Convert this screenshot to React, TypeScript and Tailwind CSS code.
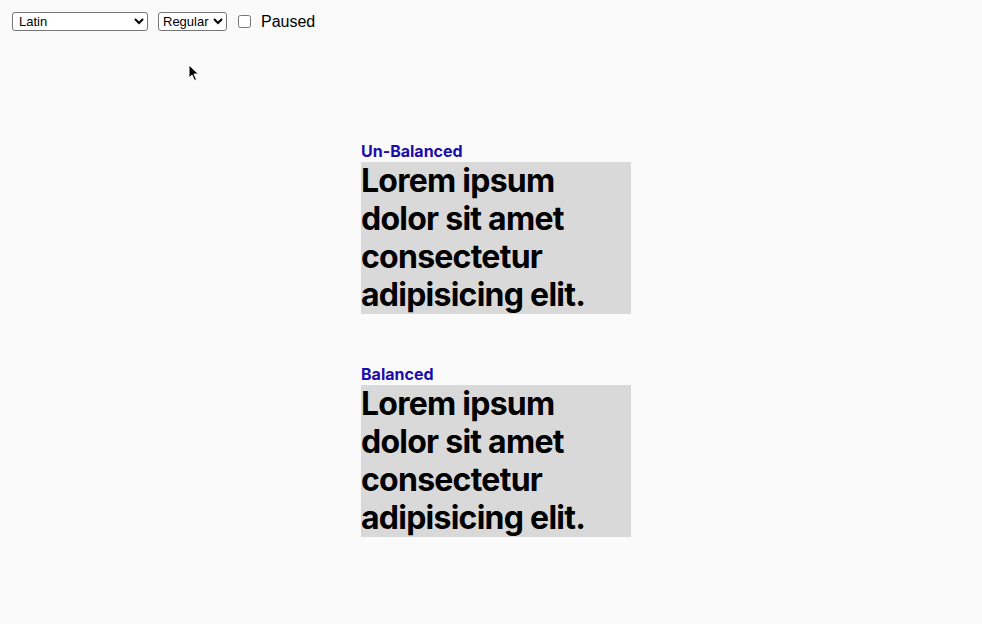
import React from "react";

const text = "Lorem ipsum dolor sit amet consectetur adipisicing elit.";

const Sample = ({ title, balanced }: { title: string; balanced?: boolean }) => {
  return (
    <section className="flex flex-col">
      <h2 className="text-[16px] leading-[16px] mb-[3px] font-bold text-[#1a0dab] font-['Inter',sans-serif]">{title}</h2>
      <p
        className={
          "w-[270px] bg-[#d9d9d9] text-black text-[32px] leading-[38px] tracking-[-0.75px] font-bold font-['Inter',sans-serif] " +
          (balanced ? "text-balance" : "")
        }
      >
        {text}
      </p>
    </section>
  );
};

export default function App() {
  return (
    <div className="relative min-h-[624px] bg-[#fafafa] font-['Liberation_Sans',Arial,sans-serif]">
      <div className="flex items-center pt-[12px] pl-[12px] text-[16px] text-black">
        <select className="w-[136px] h-[19px] border border-[#767676] rounded-[3px] bg-white text-[13px] pl-[2px]">
          <option>Latin</option>
        </select>
        <select className="ml-[10px] w-[69px] h-[19px] border border-[#767676] rounded-[3px] bg-white text-[13px] pl-0">
          <option>Regular</option>
        </select>
        <label className="ml-[11px] flex items-center">
          <input type="checkbox" className="w-[13px] h-[13px]" />
          <span className="ml-[10px] leading-[19px]">Paused</span>
        </label>
      </div>

      <div className="ml-[361px] mt-[112px] flex flex-col gap-[52px]">
        <Sample title="Un-Balanced" />
        <Sample title="Balanced" balanced />
      </div>

      {/* mouse pointer captured in the screenshot */}
      <svg className="absolute left-[188px] top-[64px]" width="12" height="18" viewBox="0 0 12 18">
        <path d="M1 1 L1 14 L4 11 L6.5 16.5 L8.5 15.5 L6 10 L10.5 10 Z" fill="#000" stroke="#fff" strokeWidth="1" />
      </svg>
    </div>
  );
}
